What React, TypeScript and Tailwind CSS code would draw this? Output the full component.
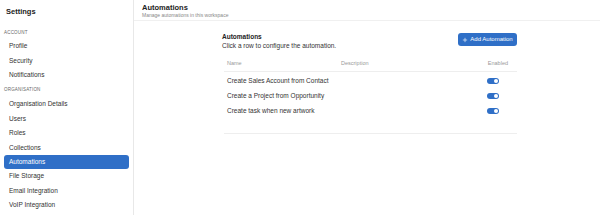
import { Plus } from 'lucide-react'

const account = ['Profile', 'Security', 'Notifications']
const organisation = [
  'Organisation Details',
  'Users',
  'Roles',
  'Collections',
  'Automations',
  'File Storage',
  'Email Integration',
  'VoIP Integration',
]

const automations = [
  'Create Sales Account from Contact',
  'Create a Project from Opportunity',
  'Create task when new artwork',
]

function NavItem({ label, active }: { label: string; active?: boolean }) {
  return (
    <div
      className={
        active
          ? 'mx-1 h-[14.4px] rounded-[3px] bg-[#2f6fc7] px-[5px] flex items-center text-white'
          : 'mx-1 h-[14.4px] px-[5px] flex items-center text-[#333]'
      }
    >
      {label}
    </div>
  )
}

function Toggle() {
  return (
    <div className="w-[12px] h-[6px] rounded-full bg-[#2f6fc7] flex items-center justify-end pr-[1px]">
      <div className="w-[4px] h-[4px] rounded-full bg-white" />
    </div>
  )
}

export default function App() {
  return (
    <div className="w-[600px] h-[215px] flex bg-white overflow-hidden text-[6.5px] font-['Liberation_Sans',sans-serif] text-[#222]">
      <aside className="w-[134px] shrink-0 border-r border-[#e8e8e8] flex flex-col">
        <div className="h-[23px] pl-[6px] pt-[1px] flex items-center font-bold text-[7.5px] text-[#222]">Settings</div>
        <div className="pl-[4px] h-[16px] flex items-end pb-[2px] text-[4.5px] uppercase text-[#666] tracking-[0.2px]">Account</div>
        {account.map((a) => (
          <NavItem key={a} label={a} />
        ))}
        <div className="pl-[4px] h-[15px] flex items-end pb-[3px] text-[4.5px] uppercase text-[#666] tracking-[0.2px]">Organisation</div>
        {organisation.map((o) => (
          <NavItem key={o} label={o} active={o === 'Automations'} />
        ))}
      </aside>
      <main className="flex-1 flex flex-col">
        <div className="h-[21px] pl-[8px] pt-[3px] border-b border-[#f0f0f0]">
          <div className="font-bold text-[7.5px] leading-[9px] text-[#222]">Automations</div>
          <div className="text-[5px] leading-[7px] text-[#888]">Manage automations in this workspace</div>
        </div>
        <div className="pl-[88px] pt-[11px]">
          <div className="w-[295px]">
            <div className="flex items-start justify-between">
              <div>
                <div className="font-bold text-[6.5px] leading-[9px] text-[#222]">Automations</div>
                <div className="text-[6.5px] leading-[10px] text-[#333]">Click a row to configure the automation.</div>
              </div>
              <button className="mt-[1px] h-[13px] w-[59px] rounded-[3px] bg-[#2f6fc7] text-white text-[6px] flex items-center justify-center gap-[2px]">
                <Plus className="w-[6px] h-[6px]" strokeWidth={2.5} />
                Add Automation
              </button>
            </div>
            <div className="mt-[5px] ml-[2px] border-b border-[#eeeeee] pb-[15px]">
              <div className="flex items-center h-[16px] border-b border-[#eeeeee] text-[5.5px] text-[#999] px-[3px]">
                <div className="w-[114px]">Name</div>
                <div className="flex-1">Description</div>
                <div className="pr-[6px]">Enabled</div>
              </div>
              <div className="pt-[1px]">
                {automations.map((a) => (
                  <div key={a} className="flex items-center h-[15px] px-[3px]">
                    <div className="flex-1 text-[#333]">{a}</div>
                    <div className="pr-[15px]">
                      <Toggle />
                    </div>
                  </div>
                ))}
              </div>
            </div>
          </div>
        </div>
      </main>
    </div>
  )
}
